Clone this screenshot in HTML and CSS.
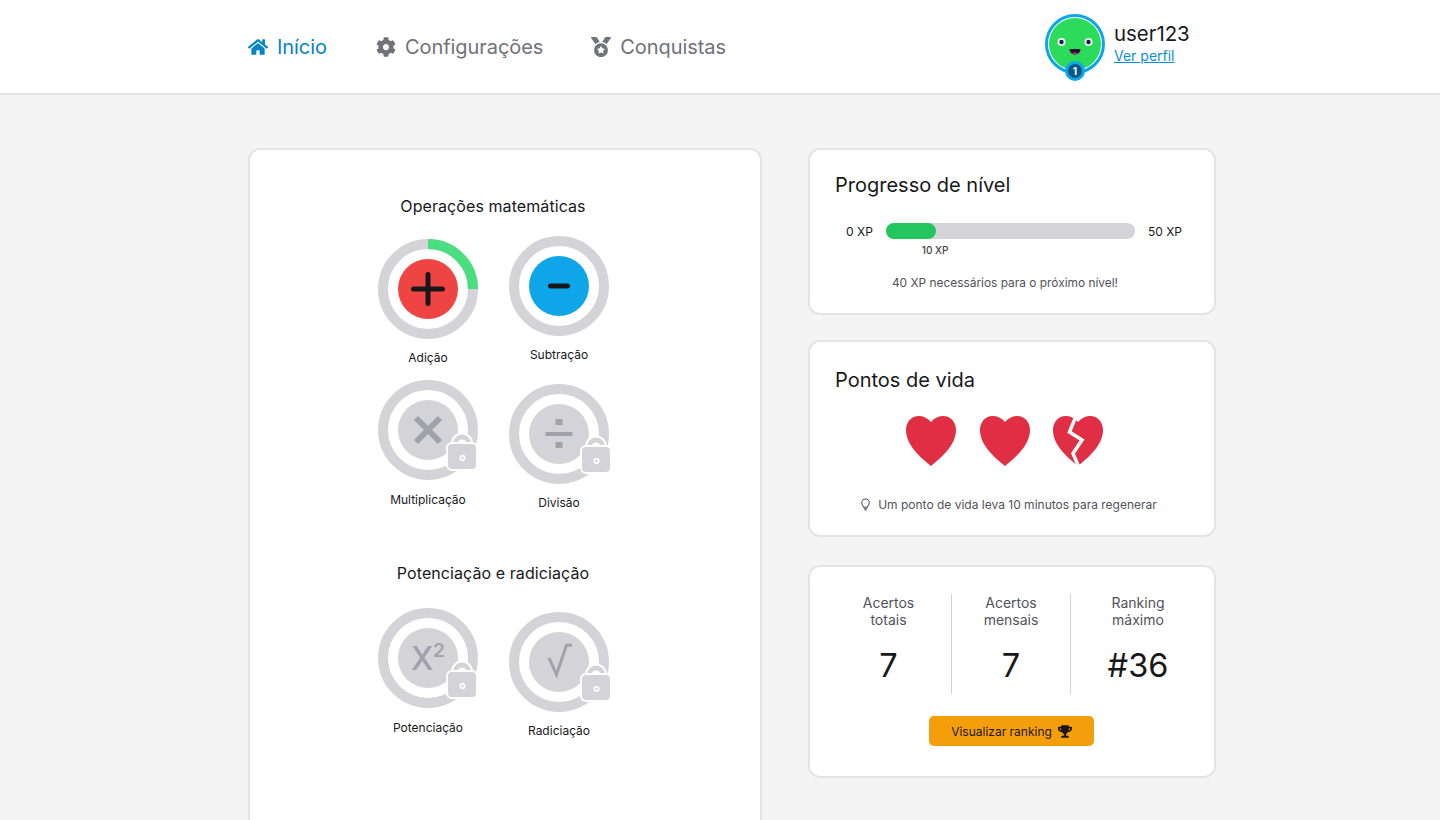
FILE: index.html
```html
<!DOCTYPE html>
<html lang="pt-BR">
<head>
  <meta charset="UTF-8" />
  <title>Início</title>
  <link rel="stylesheet" href="styles.css">
</head>
<body>
<header class="topbar">
  <nav class="nav">
    <a class="nav-link active" href="#">
      <svg class="nav-icon" viewBox="0 0 576 512"><path d="M280.37 148.26L96 300.11V464a16 16 0 0 0 16 16l112.06-.29a16 16 0 0 0 15.92-16V368a16 16 0 0 1 16-16h64a16 16 0 0 1 16 16v95.64a16 16 0 0 0 16 16.05L464 480a16 16 0 0 0 16-16V300L295.67 148.26a12.19 12.19 0 0 0-15.3 0zM571.6 251.47L488 182.56V44.05a12 12 0 0 0-12-12h-56a12 12 0 0 0-12 12v72.61L318.47 43a48 48 0 0 0-61 0L4.34 251.47a12 12 0 0 0-1.6 16.9l25.5 31A12 12 0 0 0 45.15 301l235.22-193.74a12.19 12.19 0 0 1 15.3 0L530.9 301a12 12 0 0 0 16.9-1.6l25.5-31a12 12 0 0 0-1.7-16.93z"/></svg>
      Início
    </a>
    <a class="nav-link" href="#">
      <svg class="nav-icon" viewBox="0 0 512 512"><path d="M487.4 315.7l-42.6-24.6c4.3-23.2 4.3-47 0-70.2l42.6-24.6c4.9-2.8 7.1-8.6 5.5-14-11.1-35.6-30-67.8-54.7-94.6-3.8-4.1-10-5.1-14.8-2.3L380.8 110c-17.9-15.4-38.5-27.3-60.8-35.1V25.8c0-5.6-3.9-10.5-9.4-11.7-36.7-8.2-74.3-7.8-109.2 0-5.5 1.2-9.4 6.1-9.4 11.7V75c-22.2 7.9-42.8 19.8-60.8 35.1L88.7 85.5c-4.9-2.8-11-1.9-14.8 2.3-24.7 26.7-43.6 58.9-54.7 94.6-1.7 5.4.6 11.2 5.5 14L67.3 221c-4.3 23.2-4.3 47 0 70.2l-42.6 24.6c-4.9 2.8-7.1 8.6-5.5 14 11.1 35.6 30 67.8 54.7 94.6 3.8 4.1 10 5.1 14.8 2.3l42.6-24.6c17.9 15.4 38.5 27.3 60.8 35.1v49.2c0 5.6 3.9 10.5 9.4 11.7 36.7 8.2 74.3 7.8 109.2 0 5.5-1.2 9.4-6.1 9.4-11.7v-49.2c22.2-7.9 42.8-19.8 60.8-35.1l42.6 24.6c4.9 2.8 11 1.9 14.8-2.3 24.7-26.7 43.6-58.9 54.7-94.6 1.5-5.5-.7-11.3-5.6-14.1zM256 336c-44.1 0-80-35.9-80-80s35.9-80 80-80 80 35.9 80 80-35.9 80-80 80z"/></svg>
      Configurações
    </a>
    <a class="nav-link" href="#">
      <svg class="nav-icon" viewBox="0 0 512 512"><path d="M223.75 130.75L154.62 15.54A31.997 31.997 0 0 0 127.18 0H16.03C3.08 0-4.5 14.57 2.92 25.18l111.27 158.96c29.72-27.77 67.52-46.83 109.56-53.39zM495.97 0H384.82c-11.24 0-21.66 5.9-27.44 15.54l-69.13 115.21c42.04 6.56 79.84 25.62 109.56 53.38L509.08 25.18C516.5 14.57 508.92 0 495.97 0zM256 160c-97.2 0-176 78.8-176 176s78.8 176 176 176 176-78.8 176-176-78.8-176-176-176zm92.52 157.26l-37.93 36.96 8.97 52.22c1.6 9.36-8.26 16.51-16.65 12.09L256 393.88l-46.9 24.65c-8.4 4.45-18.25-2.74-16.65-12.09l8.97-52.22-37.93-36.96c-6.82-6.64-3.05-18.23 6.35-19.59l52.43-7.64 23.43-47.52c2.11-4.28 6.19-6.39 10.28-6.39 4.11 0 8.22 2.14 10.33 6.39l23.43 47.52 52.43 7.64c9.4 1.36 13.17 12.95 6.35 19.59z"/></svg>
      Conquistas
    </a>
  </nav>
  <div class="user">
    <div class="avatar">
      <svg viewBox="0 0 60 60" width="60" height="60">
        <circle cx="30" cy="30" r="28.5" fill="#fff" stroke="#0ea5e9" stroke-width="3"/>
        <circle cx="30" cy="30" r="26" fill="#2ddb5a"/>
        <circle cx="16.5" cy="28" r="4" fill="#f4f4f5"/>
        <circle cx="16.5" cy="28" r="2.2" fill="#1e1b4b"/>
        <circle cx="43.5" cy="28" r="4" fill="#f4f4f5"/>
        <circle cx="43.5" cy="28" r="2.2" fill="#1e1b4b"/>
        <path d="M24.500 35h11c0 3-2.500 5.500-5.500 5.500s-5.500-2.500-5.500-5.500z" fill="#1f1235"/>
        <path d="M27.300 39.300c.6-1.200 4.800-1.200 5.400 0-.7.800-1.600 1.200-2.700 1.200s-2-.4-2.700-1.200z" fill="#db2777"/>
      </svg>
      <span class="level">1</span>
    </div>
    <div class="user-info">
      <span class="username">user123</span>
      <a class="profile-link" href="#">Ver perfil</a>
    </div>
  </div>
</header>

<main class="content">
  <section class="card skills">
    <h2 class="skills-title">Operações matemáticas</h2>
    <div class="skill-row">
      <div class="skill drop-3">
        <svg class="ring" viewBox="0 0 100 100">
          <circle class="ring-track" cx="50" cy="50" r="45"/>
          <circle class="ring-value" cx="50" cy="50" r="45" pathLength="100" stroke-dasharray="25 75" transform="rotate(-90 50 50)"/>
          <circle class="disc-red" cx="50" cy="50" r="30"/>
          <path class="glyph-dark" d="M50 35.500v29M35.500 50h29"/>
        </svg>
        <span class="skill-name">Adição</span>
      </div>
      <div class="skill">
        <svg class="ring" viewBox="0 0 100 100">
          <circle class="ring-track" cx="50" cy="50" r="45"/>
          <circle class="disc-blue" cx="50" cy="50" r="30"/>
          <path class="glyph-dark" d="M41.500 50h17"/>
        </svg>
        <span class="skill-name">Subtração</span>
      </div>
    </div>
    <div class="skill-row row-gap">
      <div class="skill">
        <svg class="ring" viewBox="0 0 100 100">
          <circle class="ring-track" cx="50" cy="50" r="45"/>
          <circle class="disc-locked" cx="50" cy="50" r="30"/>
          <path class="glyph-locked" d="M38 38l24 24M62 38L38 62"/>
        </svg>
        <svg class="lock" viewBox="0 0 32 38"><use href="#lock-shape"/></svg>
        <span class="skill-name name-low">Multiplicação</span>
      </div>
      <div class="skill drop-4">
        <svg class="ring" viewBox="0 0 100 100">
          <circle class="ring-track" cx="50" cy="50" r="45"/>
          <circle class="disc-locked" cx="50" cy="50" r="30"/>
          <path class="glyph-thin" d="M36.500 50h27"/>
          <rect class="glyph-fill" x="46.500" y="35" width="7" height="6"/>
          <rect class="glyph-fill" x="46.500" y="58" width="7" height="6"/>
        </svg>
        <svg class="lock lock-right" viewBox="0 0 32 38"><use href="#lock-shape"/></svg>
        <span class="skill-name">Divisão</span>
      </div>
    </div>

    <h2 class="skills-title second">Potenciação e radiciação</h2>
    <div class="skill-row">
      <div class="skill">
        <svg class="ring" viewBox="0 0 100 100">
          <circle class="ring-track" cx="50" cy="50" r="45"/>
          <circle class="disc-locked" cx="50" cy="50" r="30"/>
          <text class="glyph-text" x="33" y="62">X</text>
          <text class="glyph-sup" x="55" y="49">2</text>
        </svg>
        <svg class="lock" viewBox="0 0 32 38"><use href="#lock-shape"/></svg>
        <span class="skill-name name-low">Potenciação</span>
      </div>
      <div class="skill drop-4">
        <svg class="ring" viewBox="0 0 100 100">
          <circle class="ring-track" cx="50" cy="50" r="45"/>
          <circle class="disc-locked" cx="50" cy="50" r="30"/>
          <path class="glyph-root" d="M40 46l7.500 16.500L57.500 33.300H63"/>
        </svg>
        <svg class="lock lock-right" viewBox="0 0 32 38"><use href="#lock-shape"/></svg>
        <span class="skill-name">Radiciação</span>
      </div>
    </div>
  </section>

  <aside class="side">
    <section class="card level-card">
      <h2 class="card-title">Progresso de nível</h2>
      <div class="xp-row">
        <span>0 XP</span>
        <div class="xp-bar">
          <div class="xp-fill" style="width: 20%"></div>
          <span class="xp-now">10 XP</span>
        </div>
        <span>50 XP</span>
      </div>
      <p class="xp-note">40 XP necessários para o próximo nível!</p>
    </section>

    <section class="card life-card">
      <h2 class="card-title">Pontos de vida</h2>
      <div class="hearts">
        <svg class="heart" viewBox="0 0 50 50"><path d="M25 6C21.500 1.800 17 0 12.800 0 5.500 0 0 6 0 14c0 15 14 27 25 36 11-9 25-21 25-36C50 6 44.500 0 37.200 0 33 0 28.500 1.800 25 6z"/></svg>
        <svg class="heart" viewBox="0 0 50 50"><path d="M25 6C21.500 1.800 17 0 12.800 0 5.500 0 0 6 0 14c0 15 14 27 25 36 11-9 25-21 25-36C50 6 44.500 0 37.200 0 33 0 28.500 1.800 25 6z"/></svg>
        <svg class="heart" viewBox="0 0 50 50">
          <path d="M25 6C21.500 1.800 17 0 12.800 0 5.500 0 0 6 0 14c0 15 14 27 25 36 11-9 25-21 25-36C50 6 44.500 0 37.200 0 33 0 28.500 1.800 25 6z"/>
          <path class="crack" d="M23 0l-6.500 16 12.500 8-9 13.500 5.500 13"/>
        </svg>
      </div>
      <p class="life-note">
        <svg class="bulb" viewBox="0 0 14 16"><path d="M4.700 11.500C4.500 9.800 2.200 8.800 2.200 5.900a4.800 4.800 0 0 1 9.600 0c0 2.900-2.300 3.900-2.500 5.600zM5 13.300h4M5.800 15h2.400"/></svg>
        Um ponto de vida leva 10 minutos para regenerar
      </p>
    </section>

    <section class="card stats-card">
      <div class="stats">
        <div class="stat">
          <span class="stat-label">Acertos<br>totais</span>
          <span class="stat-value">7</span>
        </div>
        <div class="stat">
          <span class="stat-label">Acertos<br>mensais</span>
          <span class="stat-value">7</span>
        </div>
        <div class="stat">
          <span class="stat-label">Ranking<br>máximo</span>
          <span class="stat-value">#36</span>
        </div>
      </div>
      <button class="rank-btn">
        Visualizar ranking
        <svg class="trophy" viewBox="0 0 576 512"><path d="M552 64H448V24c0-13.300-10.700-24-24-24H152c-13.300 0-24 10.700-24 24v40H24C10.700 64 0 74.700 0 88v56c0 35.700 22.500 72.400 61.900 100.700 31.500 22.700 69.800 37.100 110 41.700C203.300 338.500 240 360 240 360v72h-48c-35.300 0-64 20.700-64 56v12c0 6.600 5.400 12 12 12h296c6.600 0 12-5.400 12-12v-12c0-35.300-28.700-56-64-56h-48v-72s36.700-21.500 68.100-73.600c40.300-4.600 78.700-19 110-41.700 39.300-28.300 61.900-65 61.900-100.700V88c0-13.300-10.700-24-24-24zM99.300 192.800C74.900 175.200 64 155.600 64 144v-16h64.200c1 32.600 5.800 61.200 12.800 86.200-15.100-5.200-29.200-12.400-41.700-21.400zM512 144c0 16.100-17.700 36.100-35.300 48.800-12.500 9-26.700 16.200-41.800 21.400 7-25 11.800-53.600 12.800-86.200H512v16z"/></svg>
      </button>
    </section>
  </aside>
</main>

<svg class="defs" width="0" height="0">
  <symbol id="lock-shape" viewBox="0 0 32 38">
    <path d="M9.500 14v-3.500a6.500 6.500 0 0 1 13 0V14" fill="none" stroke="#fff" stroke-width="9"/>
    <path d="M9.500 14v-3.500a6.500 6.500 0 0 1 13 0V14" fill="none" stroke="#d4d4d8" stroke-width="5"/>
    <rect x="1" y="10" width="30" height="27" rx="5" fill="#d4d4d8" stroke="#fff" stroke-width="2"/>
    <circle cx="16.500" cy="25" r="2.200" fill="none" stroke="#fff" stroke-width="1.700"/>
  </symbol>
</svg>
</body>
</html>
```
FILE: styles.css
```css
* {
  box-sizing: border-box;
}
html, body {
  height: 100vh;
  overflow: hidden;
}
body {
  margin: 0;
  background: #f4f4f4;
  color: #18181b;
  font-family: 'Inter', 'Liberation Sans', sans-serif;
}

/* topo */
.topbar {
  height: 95px;
  background: #fff;
  border-bottom: 2px solid #e4e4e7;
  display: flex;
  align-items: center;
  padding: 0 0 0 248px;
}
.nav {
  display: flex;
  align-items: center;
  gap: 48px;
  width: 797px;
}
.nav-link {
  display: flex;
  align-items: center;
  gap: 9px;
  color: #71717a;
  font-size: 20px;
  letter-spacing: -0.06px;
  text-decoration: none;
}
.nav-link.active {
  color: #0284c7;
  margin-right: 1px;
}
.nav-icon {
  width: 20px;
  height: 20px;
  fill: currentColor;
}
.user {
  display: flex;
  align-items: center;
  gap: 9px;
  margin-bottom: 5px;
}
.avatar {
  position: relative;
  width: 60px;
  height: 60px;
}
.avatar svg {
  display: block;
}
.level {
  position: absolute;
  left: 20px;
  top: 47px;
  width: 20px;
  height: 20px;
  border-radius: 50%;
  border: 3px solid #0ea5e9;
  background: #075985;
  color: #fff;
  font-size: 10px;
  font-weight: 700;
  line-height: 14px;
  text-align: center;
}
.user-info {
  display: flex;
  flex-direction: column;
  align-items: flex-start;
  gap: 1px;
  margin-bottom: 3px;
}
.username {
  font-size: 20.4px;
  line-height: 24px;
}
.profile-link {
  color: #0b8fd6;
  font-size: 14px;
  line-height: 17px;
}

/* conteudo */
.content {
  display: flex;
  align-items: flex-start;
  gap: 46px;
  padding: 53px 0 0 248px;
}
.card {
  background: #fff;
  border: 2px solid #e4e4e7;
  border-radius: 12px;
}
.skills {
  width: 514px;
  height: 760px;
  padding: 46px 0 0 127px;
}
.skills-title {
  width: 232px;
  margin: 0 0 20px;
  font-size: 16px;
  line-height: 20px;
  font-weight: 420;
  letter-spacing: 0.08px;
  text-align: center;
  white-space: nowrap;
}
.skills-title.second {
  margin-top: 53px;
  margin-bottom: 25px;
}
.skill-row {
  display: flex;
  align-items: flex-start;
  gap: 31px;
  margin-left: 1px;
}
.row-gap {
  margin-top: 15px;
}
.skill {
  position: relative;
  width: 100px;
  display: flex;
  flex-direction: column;
  align-items: center;
}
.drop-3 {
  margin-top: 3px;
}
.drop-4 {
  margin-top: 4px;
}
.ring {
  width: 100px;
  height: 100px;
  display: block;
}
.ring-track, .ring-value {
  fill: none;
  stroke-width: 10;
}
.ring-track {
  stroke: #d4d4d8;
}
.ring-value {
  stroke: #4ade80;
}
.disc-red {
  fill: #ef4444;
}
.disc-blue {
  fill: #0ea5e9;
}
.disc-locked {
  fill: #d4d4d8;
}
.glyph-dark {
  fill: none;
  stroke: #18181b;
  stroke-width: 5;
  stroke-linecap: round;
}
.glyph-locked {
  fill: none;
  stroke: #a1a1aa;
  stroke-width: 6;
}
.glyph-thin {
  stroke: #a1a1aa;
  stroke-width: 4;
}
.glyph-fill {
  fill: #a1a1aa;
}
.glyph-text {
  fill: #a1a1aa;
  font-size: 32px;
  font-weight: 500;
}
.glyph-sup {
  fill: #a1a1aa;
  font-size: 19px;
  font-weight: 600;
}
.glyph-root {
  fill: none;
  stroke: #a1a1aa;
  stroke-width: 3;
}
.lock {
  position: absolute;
  left: 68px;
  top: 53px;
  width: 32px;
  height: 38px;
}
.lock-right {
  left: 71px;
  top: 52px;
}
.skill-name {
  margin-top: 11px;
  font-size: 12px;
  line-height: 15px;
  white-space: nowrap;
}
.name-low {
  margin-top: 12px;
}
.defs {
  position: absolute;
}

/* coluna direita */
.side {
  width: 408px;
}
.card-title {
  margin: 0;
  font-size: 20px;
  line-height: 24px;
  font-weight: 420;
}
.level-card {
  height: 167px;
  padding: 23px 25px 0;
}
.xp-row {
  display: flex;
  align-items: center;
  justify-content: space-between;
  margin-top: 26px;
  padding: 0 7px 0 11px;
  font-size: 12px;
}
.xp-bar {
  position: relative;
  width: 249px;
  height: 16px;
  border-radius: 8px;
  background: #d4d4d8;
}
.xp-fill {
  height: 16px;
  border-radius: 8px;
  background: #22c55e;
}
.xp-now {
  position: absolute;
  left: 36px;
  top: 21px;
  color: #3f3f46;
  font-size: 10px;
  font-weight: 500;
  line-height: 12px;
}
.xp-note {
  margin: 36px 14px 0 0;
  color: #52525b;
  font-size: 11.9px;
  line-height: 15px;
  text-align: center;
}
.life-card {
  height: 197px;
  margin-top: 25px;
  padding: 26px 25px 0;
}
.hearts {
  display: flex;
  justify-content: center;
  gap: 23.5px;
  margin-top: 24px;
  padding-right: 15px;
}
.heart {
  width: 50px;
  height: 50px;
  fill: #e02f44;
}
.crack {
  fill: none;
  stroke: #fff;
  stroke-width: 3.5;
}
.life-note {
  display: flex;
  align-items: center;
  justify-content: center;
  gap: 7px;
  margin: 31px 0 0;
  padding-right: 7px;
  color: #52525b;
  font-size: 12px;
  line-height: 15px;
}
.bulb {
  width: 11px;
  height: 13px;
  fill: none;
  stroke: #52525b;
  stroke-width: 1.300;
}
.stats-card {
  height: 213px;
  margin-top: 28px;
  padding-top: 27px;
  display: flex;
  flex-direction: column;
  align-items: flex-start;
}
.stats {
  display: grid;
  grid-template-columns: 126px 119px 134px;
  width: 379px;
  margin-left: 16px;
}
.stat {
  height: 100px;
  display: flex;
  flex-direction: column;
  align-items: center;
  border-right: 1px solid #d4d4d8;
}
.stat:last-child {
  border-right: none;
}
.stat-label {
  color: #52525b;
  font-size: 14px;
  line-height: 17px;
  text-align: center;
}
.stat-value {
  margin-top: 17px;
  font-size: 32.5px;
  line-height: 41px;
}
.rank-btn {
  display: flex;
  align-items: center;
  justify-content: center;
  gap: 6px;
  width: 165px;
  height: 30px;
  margin: 22px 0 0 119px;
  border: none;
  border-radius: 5px;
  background: #f59e0b;
  color: #18181b;
  font-family: inherit;
  font-size: 12px;
}
.trophy {
  width: 14px;
  height: 13px;
  fill: #18181b;
}
```
